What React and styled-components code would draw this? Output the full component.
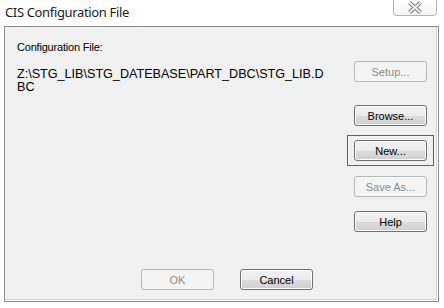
import React from 'react'
import styled, { createGlobalStyle } from 'styled-components'

const GlobalStyle = createGlobalStyle`
  html, body {
    margin: 0;
    padding: 0;
    background: #ffffff;
  }
  #root {
    width: 444px;
    height: 308px;
  }
`

const Window = styled.div`
  width: 444px;
  height: 308px;
  display: flex;
  flex-direction: column;
  background: #ffffff;
  overflow: hidden;
`

const TitleBar = styled.div`
  height: 26px;
  display: flex;
  align-items: flex-start;
  justify-content: space-between;
  padding: 0 7px 0 5px;
`

const Title = styled.h1`
  margin: 3px 0 0;
  font-family: 'Noto Sans', sans-serif;
  font-weight: 400;
  font-size: 13px;
  letter-spacing: -0.35px;
  line-height: 18px;
  color: #1a1a1a;
`

const CloseButton = styled.button`
  width: 44px;
  height: 17px;
  margin-top: -1px;
  padding: 0;
  display: flex;
  align-items: center;
  justify-content: center;
  border: 1px solid #b4b4b4;
  border-radius: 0 0 4px 4px;
  background: linear-gradient(#ffffff, #f4f4f4);
`

const Panel = styled.div`
  flex: 1;
  margin: 0 5px 6px 4px;
  display: flex;
  flex-direction: column;
  background: #f0f0f0;
  border: 1px solid #8f8f8f;
  box-shadow: inset -1px -1px 0 #ffffff, inset -2px -2px 0 #d6d6d6;
`

const Body = styled.div`
  flex: 1;
  display: flex;
  padding: 12px 11px 0 12px;
`

const Info = styled.div`
  flex: 1;
  font-family: 'Liberation Sans', Arial, sans-serif;
  font-size: 11px;
  color: #000000;
`

const Label = styled.div`
  line-height: 13px;
  margin-top: 2px;
  letter-spacing: -0.2px;
`

const Path = styled.div`
  margin-top: 14px;
  width: 313px;
  font-size: 12.6px;
  line-height: 13px;
  word-break: break-all;
`

const ButtonColumn = styled.div`
  width: 73px;
  display: flex;
  flex-direction: column;
  padding-top: 22px;
`

const Highlight = styled.div`
  margin: 9px -7px 0 -7px;
  padding: 4px 6px 4px 6px;
  border: 1px solid rgb(230, 40, 44);
`

const Button = styled.button`
  width: 73px;
  height: 21px;
  margin-top: ${p => p.$gap || 0}px;
  padding: 0;
  font-family: 'Liberation Sans', Arial, sans-serif;
  font-size: 11px;
  color: ${p => (p.disabled ? '#8c8c8c' : '#000000')};
  border: 1px solid ${p => (p.disabled ? '#b6b9bb' : '#707070')};
  border-radius: 3px;
  background: ${p =>
    p.disabled
      ? '#f4f4f4'
      : 'linear-gradient(#f2f2f2 0%, #ebebeb 50%, #dddddd 51%, #cfcfcf 100%)'};
  box-shadow: inset 0 0 0 1px ${p => (p.disabled ? '#f4f4f4' : '#fcfcfc')};
`

const Footer = styled.div`
  height: 38px;
  display: flex;
  justify-content: center;
  gap: 26px;
  padding-left: 11px;
  padding-top: 6px;
  box-sizing: border-box;
`

const CloseIcon = () => (
  <svg width="16" height="13" viewBox="0 0 16 13">
    <path d="M2.5 1.5 L13.5 11.5 M13.5 1.5 L2.5 11.5" stroke="#7d7d7d" strokeWidth="4" />
    <path d="M2.5 1.5 L13.5 11.5 M13.5 1.5 L2.5 11.5" stroke="#ededed" strokeWidth="2" />
  </svg>
)

const App = () => {
  return (
    <>
      <GlobalStyle />
      <Window>
        <TitleBar>
          <Title>CIS Configuration File</Title>
          <CloseButton aria-label="close">
            <CloseIcon />
          </CloseButton>
        </TitleBar>
        <Panel>
          <Body>
            <Info>
              <Label>Configuration File:</Label>
              <Path>Z:\STG_LIB\STG_DATEBASE\PART_DBC\STG_LIB.DBC</Path>
            </Info>
            <ButtonColumn>
              <Button disabled>Setup...</Button>
              <Button $gap={23}>Browse...</Button>
              <Highlight>
                <Button>New...</Button>
              </Highlight>
              <Button disabled $gap={10}>Save As...</Button>
              <Button $gap={14}>Help</Button>
            </ButtonColumn>
          </Body>
          <Footer>
            <Button disabled>OK</Button>
            <Button>Cancel</Button>
          </Footer>
        </Panel>
      </Window>
    </>
  )
}

export default App
